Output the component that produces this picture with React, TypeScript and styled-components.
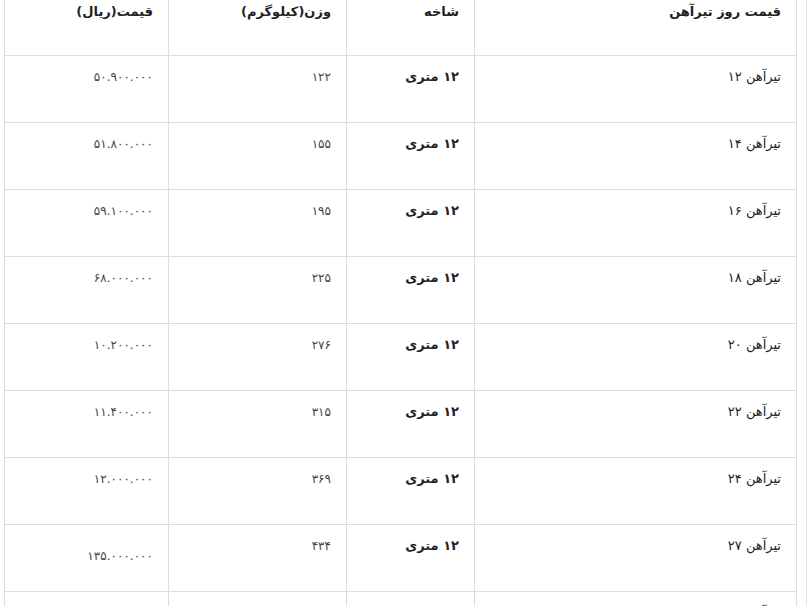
import styled, { createGlobalStyle } from 'styled-components';

const GlobalStyle = createGlobalStyle`
  html, body {
    margin: 0;
    padding: 0;
    background: #ffffff;
  }
  body {
    font-family: "DejaVu Sans", "Noto Sans", sans-serif;
    color: #222;
  }
`;

const Page = styled.div`
  width: 807px;
  height: 606px;
  overflow: hidden;
  box-sizing: border-box;
  padding-left: 4px;
  border-right: 1px solid #e4e4e4;
`;

const Table = styled.table`
  direction: rtl;
  width: 792px;
  border-collapse: collapse;
  table-layout: fixed;
`;

const HeadCell = styled.th<{ $w: number }>`
  width: ${(p) => p.$w}px;
  height: 55px;
  padding: 4px 15px 0;
  box-sizing: border-box;
  text-align: right;
  vertical-align: top;
  font-size: 13px;
  font-weight: bold;
  color: #222;
  border-left: 1px solid #dcdcdc;
  border-right: 1px solid #dcdcdc;
  border-bottom: 1px solid #dcdcdc;
`;

const Cell = styled.td<{ $kind: 'name' | 'bold' | 'num'; $drop?: boolean }>`
  height: 67px;
  padding: ${(p) => (p.$drop ? '22px' : '12px')} 15px 0;
  box-sizing: border-box;
  text-align: right;
  vertical-align: top;
  border: 1px solid #dcdcdc;
  font-size: ${(p) => (p.$kind === 'num' ? '12px' : '13px')};
  font-weight: ${(p) => (p.$kind === 'bold' ? 'bold' : 'normal')};
  color: ${(p) => (p.$kind === 'num' ? '#444' : '#222')};
  line-height: 18px;
  white-space: nowrap;
`;

interface BeamRow {
  name: string;
  branch: string;
  weight: string;
  price: string;
  drop?: boolean;
}

const rows: BeamRow[] = [
  { name: 'تیرآهن ۱۲', branch: '۱۲ متری', weight: '۱۲۲', price: '۵۰.۹۰۰.۰۰۰' },
  { name: 'تیرآهن ۱۴', branch: '۱۲ متری', weight: '۱۵۵', price: '۵۱.۸۰۰.۰۰۰' },
  { name: 'تیرآهن ۱۶', branch: '۱۲ متری', weight: '۱۹۵', price: '۵۹.۱۰۰.۰۰۰' },
  { name: 'تیرآهن ۱۸', branch: '۱۲ متری', weight: '۲۲۵', price: '۶۸.۰۰۰.۰۰۰' },
  { name: 'تیرآهن ۲۰', branch: '۱۲ متری', weight: '۲۷۶', price: '۱۰.۲۰۰.۰۰۰' },
  { name: 'تیرآهن ۲۲', branch: '۱۲ متری', weight: '۳۱۵', price: '۱۱.۴۰۰.۰۰۰' },
  { name: 'تیرآهن ۲۴', branch: '۱۲ متری', weight: '۳۶۹', price: '۱۲.۰۰۰.۰۰۰' },
  { name: 'تیرآهن ۲۷', branch: '۱۲ متری', weight: '۴۳۴', price: '۱۳۵.۰۰۰.۰۰۰', drop: true },
  { name: 'تیرآهن ۳۰', branch: '۱۲ متری', weight: '۵۰۴', price: '۱۵۰.۰۰۰.۰۰۰' },
];

function App() {
  return (
    <>
      <GlobalStyle />
      <Page>
        <Table>
          <thead>
            <tr>
              <HeadCell $w={322}>قیمت روز تیرآهن</HeadCell>
              <HeadCell $w={128}>شاخه</HeadCell>
              <HeadCell $w={178}>وزن(کیلوگرم)</HeadCell>
              <HeadCell $w={164}>قیمت(ریال)</HeadCell>
            </tr>
          </thead>
          <tbody>
            {rows.map((row) => (
              <tr key={row.name}>
                <Cell $kind="name">{row.name}</Cell>
                <Cell $kind="bold">{row.branch}</Cell>
                <Cell $kind="num">{row.weight}</Cell>
                <Cell $kind="num" $drop={row.drop}>
                  {row.price}
                </Cell>
              </tr>
            ))}
          </tbody>
        </Table>
      </Page>
    </>
  );
}

export default App;
